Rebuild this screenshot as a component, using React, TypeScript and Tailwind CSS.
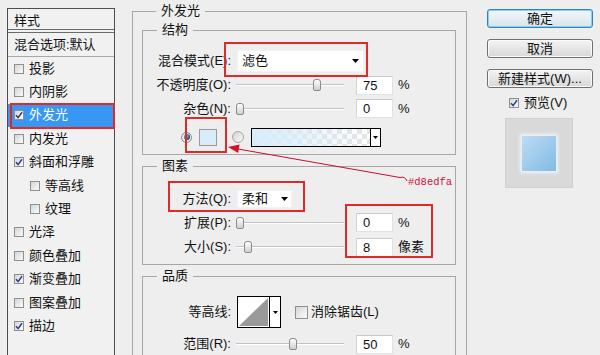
import React from 'react'

const layers = [
  { t: '投影' },
  { t: '内阴影' },
  { t: '外发光', on: true, sel: true },
  { t: '内发光' },
  { t: '斜面和浮雕', on: true },
  { t: '等高线', sub: true },
  { t: '纹理', sub: true },
  { t: '光泽' },
  { t: '颜色叠加' },
  { t: '渐变叠加', on: true },
  { t: '图案叠加' },
  { t: '描边', on: true },
]

function Check({ on, size = 'w-[10px] h-[10px]' }: { on?: boolean; size?: string }) {
  return (
    <span className={`${size} shrink-0 border border-[#8e8f8f] bg-linear-to-br from-[#d6d6d6] to-[#fbfbfb] flex items-center justify-center`}>
      {on && (
        <svg width="8" height="8" viewBox="0 0 8 8">
          <path d="M1 4.2 L3.1 6.6 L7 1.2" stroke="#2b3e8f" strokeWidth="1.5" fill="none" />
        </svg>
      )}
    </span>
  )
}

function Arrow() {
  return (
    <svg width="7" height="4" viewBox="0 0 7 4">
      <polygon points="0,0 7,0 3.5,4" fill="#000" />
    </svg>
  )
}

function Group({ title, className = '', children }: { title: string; className?: string; children: React.ReactNode }) {
  return (
    <fieldset className={`border border-[#a7a7a7] ${className}`}>
      <legend className="ml-[14px] px-[5px] text-[13px] leading-[14px]">{title}</legend>
      {children}
    </fieldset>
  )
}

function Label({ children }: { children: React.ReactNode }) {
  return <div className="w-[88px] shrink-0 text-right text-[13px] leading-[16px]">{children}</div>
}

function Slider({ thumb }: { thumb: string }) {
  return (
    <div className="relative ml-[5px] w-[108px] h-[12px] flex items-center">
      <div className="w-full h-[2px] bg-[#c4c4c4] border-b border-white"></div>
      <div className={`absolute top-0 ${thumb} w-[8px] h-[12px] rounded-t-[3px] rounded-b-[2px] border border-[#8a8a8a] bg-linear-to-b from-white to-[#cfcfcf]`}></div>
    </div>
  )
}

function Field({ value, unit }: { value: string; unit: string }) {
  return (
    <>
      <div className="ml-[12px] w-[37px] h-[19px] bg-white border border-[#e2e2e2] border-t-[#c9c9c9] border-l-[#d4d4d4] pl-[6px] text-[13px] leading-[17px]">{value}</div>
      <div className="ml-[5px] text-[13px] leading-[16px]">{unit}</div>
    </>
  )
}

function Button({ label, primary }: { label: string; primary?: boolean }) {
  return (
    <div
      className={`w-[106px] h-[19px] rounded-[3px] border flex items-center justify-center text-[13px] leading-[14px] ${
        primary
          ? 'border-[#3c7fb1] shadow-[inset_0_0_0_1px_#7fd3f8] bg-linear-to-b from-[#f3f8fb] to-[#d9e4eb]'
          : 'border-[#707070] shadow-[inset_0_0_0_1px_#fbfbfb] bg-linear-to-b from-[#f4f4f4] to-[#d8d8d8]'
      }`}
    >
      {label}
    </div>
  )
}

export default function App() {
  return (
    <div className="relative w-[600px] h-[355px] overflow-hidden bg-[#eeeeee] text-[#111] flex items-start [font-family:'Liberation_Sans','Noto_Sans_CJK_SC',sans-serif]">
      {/* styles list */}
      <div className="ml-[7px] mt-[8px] w-[108px] h-[360px] shrink-0 border border-[#4e4e4e] bg-[#f1f1f1]">
        <div className="h-[21px] pl-[6px] pt-[3px] flex items-center text-[13px] border-b border-[#6a6a6a]">样式</div>
        <div className="mt-[2px] h-[25px] pl-[6px] flex items-center text-[13px] border-t border-[#6a6a6a] border-b border-b-[#a8a8a8]">混合选项:默认</div>
        {layers.map(l => (
          <div
            key={l.t}
            className={`h-[23.4px] flex items-center gap-[5px] text-[13px] ${l.sub ? 'pl-[22px]' : 'pl-[6px]'} ${
              l.sel ? 'bg-[#3797f3] text-white' : ''
            }`}
          >
            <Check on={l.on} />
            <span className="leading-[14px]">{l.t}</span>
          </div>
        ))}
      </div>

      {/* main settings */}
      <Group title="外发光" className="ml-[17px] mt-[4px] w-[335px] h-[370px] shrink-0 pl-[9px] pr-[10px]">
        <Group title="结构" className="mt-[5px] pb-[4px]">
          <div className="mt-[12px] h-[24px] flex items-center">
            <Label>混合模式(E):</Label>
            <div className="ml-[6px] w-[127px] h-[22px] bg-white border border-[#f2f2f2] flex items-center justify-between pl-[4px] pr-[4px] text-[13px]">
              <span>滤色</span>
              <Arrow />
            </div>
          </div>
          <div className="h-[24px] flex items-center">
            <Label>不透明度(O):</Label>
            <Slider thumb="left-[77px]" />
            <Field value="75" unit="%" />
          </div>
          <div className="h-[23px] flex items-center">
            <Label>杂色(N):</Label>
            <Slider thumb="left-0" />
            <Field value="0" unit="%" />
          </div>
          <div className="mt-[4px] h-[26px] flex items-center">
            <div className="ml-[38px] w-[11px] h-[11px] rounded-full border border-[#7d8a93] bg-[#e8ecef] flex items-center justify-center">
              <div className="w-[6px] h-[6px] rounded-full bg-[radial-gradient(circle_at_35%_35%,#8ed0ee_0,#1e5b80_60%,#153a55_100%)]"></div>
            </div>
            <div className="ml-[7px] w-[18px] h-[17px] bg-[#d8edfa] border border-[#9a9a9a]"></div>
            <div className="ml-[15px] w-[12px] h-[12px] rounded-full border border-[#a5a5a5] bg-linear-to-br from-[#d2d2d2] to-[#fafafa]"></div>
            <div className="ml-[7px] w-[130px] h-[19px] border border-black flex">
              <div className="flex-1 bg-[conic-gradient(#e3e3e3_25%,#ffffff_0_50%,#e3e3e3_0_75%,#ffffff_0)] bg-[length:10px_10px]">
                <div className="w-full h-full bg-linear-to-r from-[#d8edfa] via-[#d8edfa99] to-[#d8edfa00]"></div>
              </div>
              <div className="w-[10px] border-l border-black bg-white flex items-center justify-center">
                <svg width="5" height="3" viewBox="0 0 5 3"><polygon points="0,0 5,0 2.5,3" fill="#000" /></svg>
              </div>
            </div>
          </div>
        </Group>

        <Group title="图素" className="mt-[4px] pb-[5px]">
          <div className="mt-[14px] h-[24px] flex items-center">
            <Label>方法(Q):</Label>
            <div className="ml-[6px] w-[55px] h-[18px] bg-white border border-[#f2f2f2] flex items-center justify-between pl-[4px] pr-[3px] text-[13px]">
              <span>柔和</span>
              <Arrow />
            </div>
          </div>
          <div className="h-[23px] flex items-center">
            <Label>扩展(P):</Label>
            <Slider thumb="left-0" />
            <Field value="0" unit="%" />
          </div>
          <div className="mt-[1px] h-[24px] flex items-center">
            <Label>大小(S):</Label>
            <Slider thumb="left-[8px]" />
            <Field value="8" unit="像素" />
          </div>
        </Group>

        <Group title="品质" className="mt-[4px] h-[120px]">
          <div className="mt-[13px] h-[32px] flex items-center">
            <Label>等高线:</Label>
            <div className="ml-[6px] w-[44px] h-[32px] border border-black bg-white flex">
              <div className="flex-1 p-[1px]">
                <svg width="100%" height="100%" viewBox="0 0 30 28" preserveAspectRatio="none">
                  <polygon points="0,28 30,0 30,28" fill="#9a9a9a" />
                </svg>
              </div>
              <div className="w-[11px] border-l border-black flex items-center justify-center">
                <svg width="5" height="3" viewBox="0 0 5 3"><polygon points="0,0 5,0 2.5,3" fill="#000" /></svg>
              </div>
            </div>
            <div className="ml-[14px]">
              <Check size="w-[13px] h-[13px]" />
            </div>
            <span className="ml-[3px] text-[13px]">消除锯齿(L)</span>
          </div>
          <div className="mt-[4px] h-[24px] flex items-center">
            <Label>范围(R):</Label>
            <Slider thumb="left-[53px]" />
            <Field value="50" unit="%" />
          </div>
        </Group>
      </Group>

      {/* buttons & preview */}
      <div className="ml-[20px] mt-[9px] w-[106px] shrink-0 flex flex-col">
        <Button label="确定" primary />
        <div className="mt-[11px]"><Button label="取消" /></div>
        <div className="mt-[11px]"><Button label="新建样式(W)..." /></div>
        <div className="mt-[9px] h-[12px] pl-[22px] flex items-center gap-[5px] text-[13px]">
          <Check on />
          <span>预览(V)</span>
        </div>
        <div className="mt-[9px] ml-[18px] w-[68px] h-[70px] bg-[#d9d9d9] border border-[#d0d0d0] flex items-center justify-center">
          <div className="w-[34px] h-[35px] bg-linear-to-br from-[#bcdcf3] to-[#82bbe4] shadow-[0_0_3px_2px_#eaf4fb]"></div>
        </div>
      </div>

      {/* annotations */}
      <div className="absolute left-[10px] top-[103px] w-[105px] h-[26px] border-2 border-[#df2a2a]"></div>
      <div className="absolute left-[224px] top-[42px] w-[144px] h-[35px] border-2 border-[#df2a2a]"></div>
      <div className="absolute left-[185px] top-[117px] w-[42px] h-[36px] border-2 border-[#df2a2a]"></div>
      <div className="absolute left-[168px] top-[181px] w-[137px] h-[31px] border-2 border-[#df2a2a]"></div>
      <div className="absolute left-[345px] top-[204px] w-[88px] h-[54px] border-2 border-[#df2a2a]"></div>
      <svg className="absolute left-0 top-0" width="600" height="355" viewBox="0 0 600 355">
        <path d="M407 181 Q405 176 400 177.5 L238 149" stroke="#c8102e" strokeWidth="1" fill="none" />
        <polygon points="228,147 239.5,144.6 238.2,153" fill="#d8102e" />
      </svg>
      <div className="absolute left-[408px] top-[176px] text-[10.5px] leading-[13px] text-[#d0103a] [font-family:'Liberation_Mono',monospace]">#d8edfa</div>
    </div>
  )
}
